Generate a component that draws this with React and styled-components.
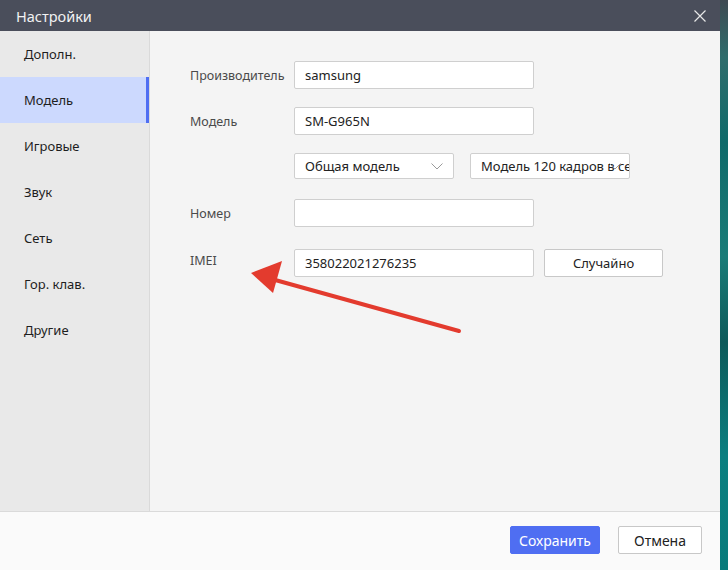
import React from 'react';
import styled, { createGlobalStyle } from 'styled-components';

const GlobalStyle = createGlobalStyle`
  html, body {
    margin: 0;
    padding: 0;
    width: 728px;
    height: 570px;
    overflow: hidden;
    font-family: 'Noto Sans', 'Open Sans', sans-serif;
  }
`;

const Page = styled.div`
  display: flex;
  width: 728px;
  height: 570px;
`;

const Dialog = styled.div`
  width: 720px;
  height: 570px;
  display: flex;
  flex-direction: column;
  background: #f4f4f4;
  position: relative;
`;

const Backdrop = styled.div`
  flex: 1;
  background: linear-gradient(180deg, #3e4a52 0%, #2f6d6c 10%, #0f6a6a 25%, #1a7c78 45%, #0d5a5a 60%, #0b7f80 80%, #087b7b 100%);
`;

const TitleBar = styled.div`
  height: 31px;
  flex-shrink: 0;
  background: #4a4e5b;
  display: flex;
  align-items: center;
  justify-content: space-between;
  padding: 0 8px 0 16px;
`;

const Title = styled.span`
  color: #f2f2f2;
  font-size: 14.5px;
`;

const CloseButton = styled.button`
  width: 24px;
  height: 24px;
  border: none;
  background: none;
  padding: 0;
  display: flex;
  align-items: center;
  justify-content: center;
`;

const Body = styled.div`
  flex: 1;
  display: flex;
  min-height: 0;
`;

const Sidebar = styled.nav`
  width: 149px;
  flex-shrink: 0;
  background: #e9e9e9;
  border-right: 1px solid #dadada;
  display: flex;
  flex-direction: column;
`;

const NavItem = styled.div`
  height: 46px;
  display: flex;
  align-items: center;
  padding-left: 24px;
  font-size: 13px;
  color: #1e1e1e;
  background: ${(p) => (p.active ? '#ccd9fe' : 'transparent')};
  box-shadow: ${(p) => (p.active ? 'inset -3px 0 0 #4f6ef2' : 'none')};
`;

const Content = styled.div`
  flex: 1;
  padding: 30px 0 0 40px;
  display: flex;
  flex-direction: column;
  position: relative;
`;

const Row = styled.div`
  display: flex;
  align-items: center;
  margin-bottom: ${(p) => p.gap || 18}px;
`;

const Label = styled.label`
  width: 104px;
  flex-shrink: 0;
  font-size: 12.5px;
  color: #4a4a4a;
  margin-top: ${(p) => p.shift || 0}px;
`;

const Field = styled.div`
  width: 240px;
  height: 28px;
  box-sizing: border-box;
  background: #fff;
  border: 1px solid #cfcfcf;
  border-radius: 2px;
  display: flex;
  align-items: center;
  padding-left: 10px;
  font-size: 13px;
  color: #222;
`;

const Select = styled.div`
  width: 160px;
  height: 26px;
  box-sizing: border-box;
  background: #fff;
  border: 1px solid #cfcfcf;
  border-radius: 2px;
  display: flex;
  align-items: center;
  padding-left: 10px;
  font-size: 13px;
  color: #222;
  position: relative;
  overflow: hidden;
  white-space: nowrap;
  margin-right: ${(p) => p.spacing || 0}px;
`;

const Chevron = styled.svg`
  position: absolute;
  right: ${(p) => p.right}px;
  top: 9px;
`;

const Spacer = styled.div`
  width: 104px;
  flex-shrink: 0;
`;

const Button = styled.button`
  height: 28px;
  box-sizing: border-box;
  font-family: inherit;
  font-size: ${(p) => p.fs || 14}px;
  border-radius: 2px;
  padding: 0;
  width: ${(p) => p.w}px;
  margin-left: ${(p) => p.ml || 0}px;
  background: ${(p) => (p.primary ? '#4f6ef2' : '#fff')};
  color: ${(p) => (p.primary ? '#fff' : '#222')};
  border: 1px solid ${(p) => (p.primary ? '#4f6ef2' : '#c8c8c8')};
`;

const Footer = styled.div`
  height: 59px;
  flex-shrink: 0;
  border-top: 1px solid #dadada;
  background: #fafafa;
  display: flex;
  align-items: center;
  justify-content: flex-end;
  padding-right: 18px;
  padding-bottom: 2px;
  box-sizing: border-box;
`;

const Arrow = styled.svg`
  position: absolute;
  left: 96px;
  top: 199px;
  pointer-events: none;
`;

const navItems = ['Дополн.', 'Модель', 'Игровые', 'Звук', 'Сеть', 'Гор. клав.', 'Другие'];

function ChevronIcon({ right }) {
  return (
    <Chevron right={right} width="12" height="7" viewBox="0 0 12 7">
      <path d="M0.5 0.5 L6 6 L11.5 0.5" fill="none" stroke="#9a9a9a" strokeWidth="1" />
    </Chevron>
  );
}

export default function App() {
  return (
    <Page>
      <GlobalStyle />
      <Dialog>
        <TitleBar>
          <Title>Настройки</Title>
          <CloseButton>
            <svg width="12" height="12" viewBox="0 0 12 12">
              <path d="M0.5 0.5 L11.5 11.5 M11.5 0.5 L0.5 11.5" stroke="#e8e8e8" strokeWidth="1.2" />
            </svg>
          </CloseButton>
        </TitleBar>
        <Body>
          <Sidebar>
            {navItems.map((item) => (
              <NavItem key={item} active={item === 'Модель'}>
                {item}
              </NavItem>
            ))}
          </Sidebar>
          <Content>
            <Row>
              <Label>Производитель</Label>
              <Field>samsung</Field>
            </Row>
            <Row>
              <Label>Модель</Label>
              <Field>SM-G965N</Field>
            </Row>
            <Row gap={20}>
              <Spacer />
              <Select spacing={16}>
                Общая модель
                <ChevronIcon right={10} />
              </Select>
              <Select>
                Модель 120 кадров в секунду
                <ChevronIcon right={8} />
              </Select>
            </Row>
            <Row gap={22}>
              <Label>Номер</Label>
              <Field />
            </Row>
            <Row>
              <Label shift={-6}>IMEI</Label>
              <Field>358022021276235</Field>
              <Button w={119} ml={10} fs={13}>Случайно</Button>
            </Row>
            <Arrow width="220" height="110" viewBox="0 0 220 110">
              <line x1="213" y1="101" x2="22" y2="48" stroke="#e33b2e" strokeWidth="4" strokeLinecap="round" />
              <polygon points="5,43 36,31 27,63" fill="#e33b2e" />
            </Arrow>
          </Content>
        </Body>
        <Footer>
          <Button primary w={90}>Сохранить</Button>
          <Button w={84} ml={18}>Отмена</Button>
        </Footer>
      </Dialog>
      <Backdrop />
    </Page>
  );
}
